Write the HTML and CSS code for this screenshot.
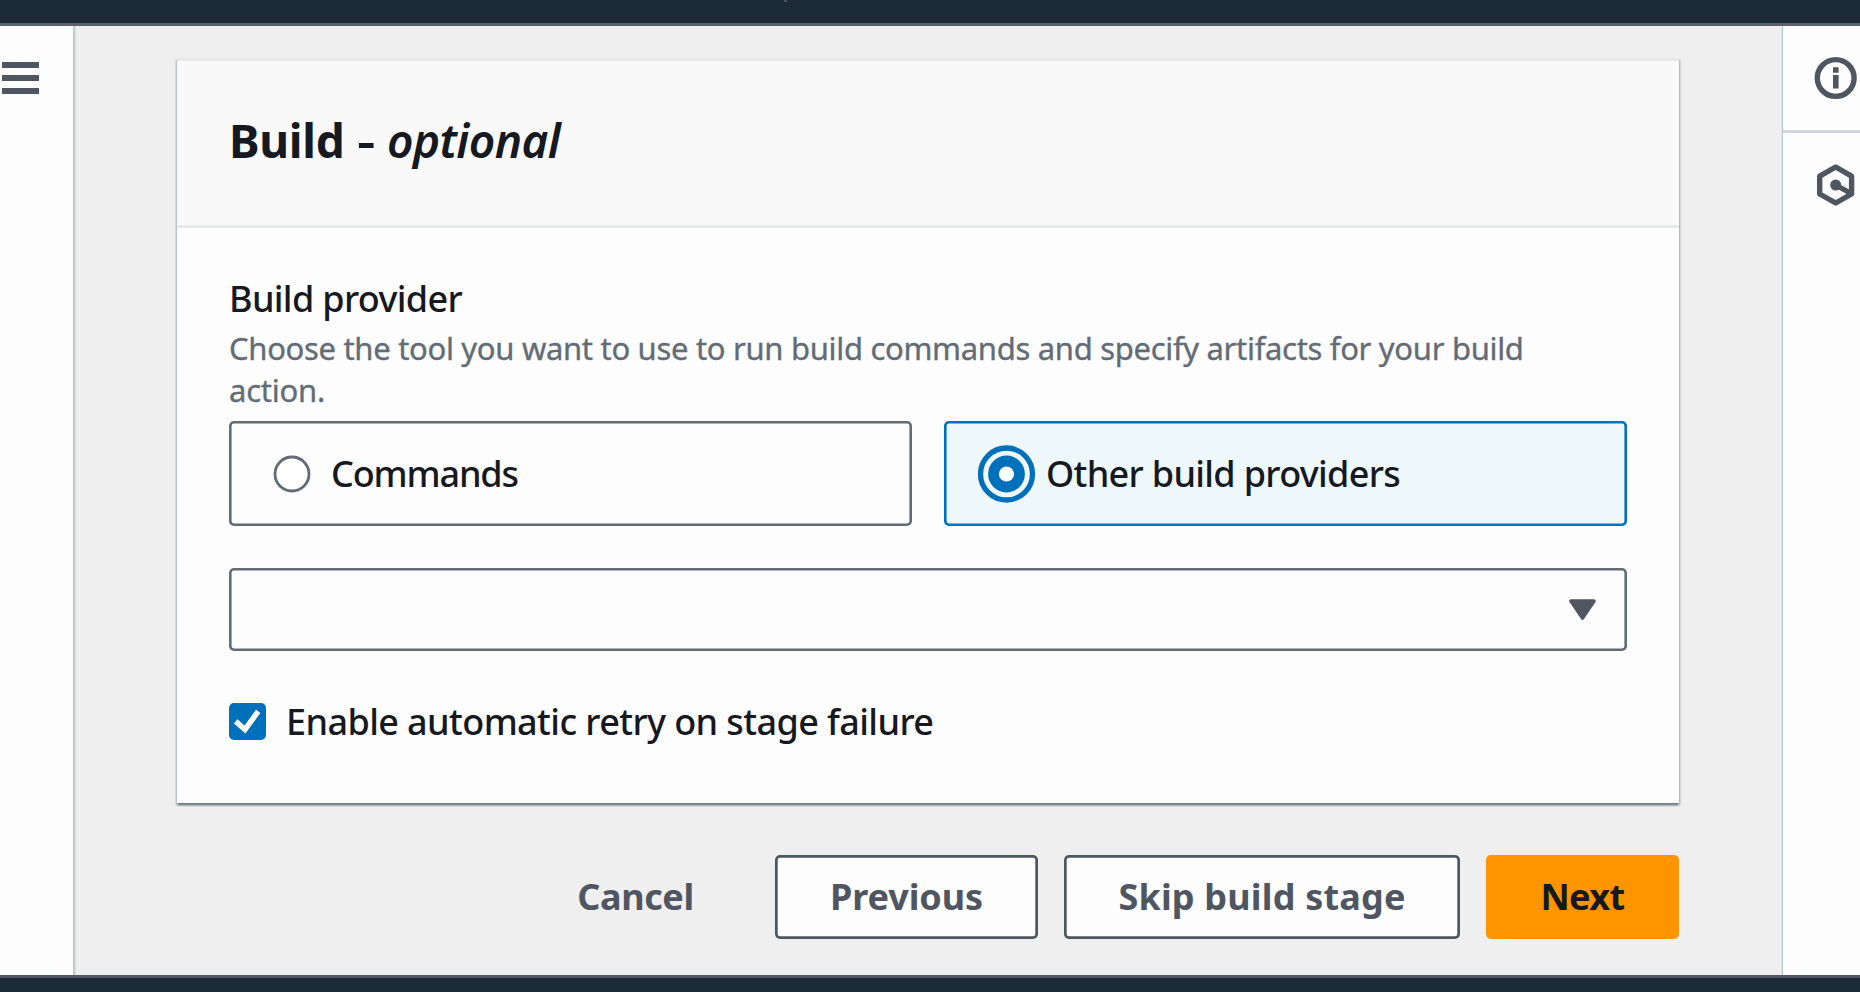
FILE: index.html
```html
<!DOCTYPE html>
<html lang="en">
<head>
<meta charset="utf-8">
<title>Build - optional</title>
<link rel="stylesheet" href="styles.css">
</head>
<body>
<div class="app">
  <header class="topbar"><span class="topbar-mark"></span></header>
  <div class="shell">
    <nav class="sidebar">
      <svg class="menu-icon" width="37" height="32" viewBox="0 0 37 32" fill="#505661"><path d="M0 0h37v6H0zM0 13h37v6H0zM0 26h37v6H0z"/></svg>
    </nav>
    <main class="content">
      <section class="card">
        <div class="card-header">
          <h1 class="title"><span class="title-main">Build</span><span class="title-dash">-</span><em class="title-opt">optional</em></h1>
        </div>
        <div class="card-body">
          <div class="label">Build provider</div>
          <p class="hint">Choose the tool you want to use to run build commands and specify artifacts for your build<br><span class="hint-end">action.</span></p>
          <div class="tiles">
            <label class="tile">
              <svg class="radio" width="60" height="60" viewBox="0 0 60 60"><circle cx="30" cy="30" r="17" fill="#fff" stroke="#636b76" stroke-width="2.8"/></svg>
              <span class="tile-text commands">Commands</span>
            </label>
            <label class="tile tile-selected">
              <svg class="radio" width="60" height="60" viewBox="0 0 60 60"><circle cx="29.5" cy="30" r="26" fill="none" stroke="#0070bb" stroke-width="5.3"/><circle cx="29.5" cy="30" r="18.4" fill="#0070bb"/><circle cx="29.5" cy="30" r="7.6" fill="#fff"/></svg>
              <span class="tile-text others">Other build providers</span>
            </label>
          </div>
          <div class="select">
            <svg width="27" height="21" viewBox="0 0 27 21"><path d="M2 2h23L13.5 19z" fill="#505661" stroke="#505661" stroke-width="3.6" stroke-linejoin="round"/></svg>
          </div>
          <label class="check">
            <svg class="checkbox" width="37" height="37" viewBox="0 0 37 37"><rect width="37" height="37" rx="5" fill="#0070bb"/><path d="M6.7 18.4 16 26.6 29.2 8.3" fill="none" stroke="#fff" stroke-width="5.4"/></svg>
            <span class="check-text">Enable automatic retry on stage failure</span>
          </label>
        </div>
      </section>
      <div class="actions">
        <button class="btn btn-link">Cancel</button>
        <button class="btn btn-previous">Previous</button>
        <button class="btn btn-skip">Skip build stage</button>
        <button class="btn btn-next">Next</button>
      </div>
    </main>
    <aside class="tools">
      <div class="tool">
        <svg width="44" height="44" viewBox="0 0 44 44"><circle cx="21.7" cy="22" r="18.4" fill="none" stroke="#505661" stroke-width="5.4"/><path d="M19 11.2h5.6v5.6H19zM19 19h5.6v13.4H19z" fill="#505661"/></svg>
      </div>
      <div class="tool tool-last">
        <svg width="44" height="44" viewBox="0 0 44 44" stroke="#505661" fill="none"><path d="M21.7 4 37.6 13.2V31L21.7 40 5.7 31V13.2z" stroke-width="5.4" stroke-linejoin="round"/><circle cx="21.7" cy="22" r="5.5" fill="#505661" stroke="none"/><path d="M21.7 22 36.7 30.2" stroke-width="5"/></svg>
      </div>
    </aside>
  </div>
  <footer class="bottombar"></footer>
</div>
</body>
</html>
```
FILE: styles.css
```css
* { box-sizing: border-box; }
body {
  margin: 0;
  font-family: "Noto Sans", "Open Sans", sans-serif;
  color: #16191f;
}
.app {
  width: 1860px;
  height: 992px;
  display: flex;
  flex-direction: column;
  overflow: hidden;
}
.topbar {
  height: 26px;
  flex: none;
  background: #1d2a37;
  border-bottom: 3px solid #5b606b;
}
.topbar-mark {
  display: block;
  width: 3px;
  height: 2px;
  margin-left: 784px;
  background: #4d505d;
}
.shell { flex: 1; display: flex; min-height: 0; background: #efefef; overflow: hidden; }
.bottombar {
  height: 17px;
  flex: none;
  background: #1d2a37;
  border-top: 3px solid #505661;
}
.sidebar {
  width: 73px;
  padding: 36px 0 0 2px;
  background: #fdfdfd;
  box-shadow: 1px 0 2px 1px #b5c0c3;
}
.menu-icon { display: block; }
.content { flex: 1; padding: 32px 104px 0; }
.card {
  height: 745px;
  border-top: 3px solid #e5e9e8;
  background: #fdfdfd;
  box-shadow: 0 3px 2px -1px #6f7c82, 1px 2px 2px 0 #9faaae, -1px 2px 2px 0 #b0bbbf;
}
.card-header {
  height: 167px;
  padding: 47px 53px 0 52px;
  background: #f9f9f9;
  border-bottom: 3px solid #e7e9e9;
}
.title {
  display: flex;
  margin: 0;
  font-size: 46px;
  line-height: 64px;
  font-weight: 700;
}
.title-main { width: 128px; letter-spacing: -0.31px; }
.title-dash { width: 30px; font-weight: 600; transform: scaleX(1.25); transform-origin: left; }
.title-opt { font-weight: 600; letter-spacing: -0.6px; }
.card-body { padding: 48px 52px 0; }
.label {
  font-size: 36px;
  line-height: 46px;
  font-weight: 500;
  letter-spacing: -0.66px;
}
.hint {
  margin: 5px 0 10px;
  font-size: 31px;
  line-height: 42px;
  letter-spacing: -0.31px;
  -webkit-text-stroke: 0.35px #636c76;
  white-space: nowrap;
  color: #636c76;
}
.hint-end { letter-spacing: -0.23px; }
.tiles { display: grid; grid-template-columns: 683px 683px; gap: 32px; }
.tile {
  height: 105px;
  padding-left: 33px;
  display: flex;
  align-items: center;
  border-radius: 5px;
  box-shadow: inset 0 0 0 2.6px #636b76;
}
.tile-selected { background: #eef8fb; box-shadow: inset 0 0 0 2.6px #0070bb; }
.radio { flex: none; }
.tile-text, .check-text { font-size: 36px; line-height: 46px; font-weight: 500; white-space: nowrap; }
.commands { margin-left: 9px; letter-spacing: -1.15px; }
.others { margin-left: 9px; letter-spacing: -0.68px; }
.select {
  height: 83px;
  margin-top: 42px;
  padding-right: 31px;
  display: flex;
  align-items: center;
  justify-content: flex-end;
  border-radius: 5px;
  box-shadow: inset 0 0 0 2.6px #636b76;
}
.check { display: flex; align-items: center; margin-top: 47px; gap: 20px; }
.check-text { letter-spacing: -0.6px; padding-top: 1px; }
.actions { display: flex; margin-top: 52px; justify-content: flex-end; }
.btn {
  height: 84px;
  padding: 0;
  border: 0;
  border-radius: 5px;
  background: #fdfdfd;
  box-shadow: inset 0 0 0 2.7px #505661;
  color: #505661;
  font: 700 36px/46px "Noto Sans", "Open Sans", sans-serif;
  white-space: nowrap;
}
.btn-link { width: 117px; margin-right: 81px; background: none; box-shadow: none; letter-spacing: -0.4px; }
.btn-previous { width: 263px; margin-right: 26px; letter-spacing: -0.1px; }
.btn-skip { width: 396px; margin-right: 26px; letter-spacing: 0.18px; }
.btn-next { width: 193px; background: #fe9400; box-shadow: none; color: #16191f; letter-spacing: -0.6px; }
.tools {
  width: 77px;
  background: #fdfdfd;
  box-shadow: -1px 0 1px 0 #b9c3c6;
}
.tool {
  height: 107px;
  padding: 30px 0 0 31px;
  border-bottom: 3px solid #d1d8d9;
}
.tool-last { border: 0; }
.tool svg { display: block; }
```
